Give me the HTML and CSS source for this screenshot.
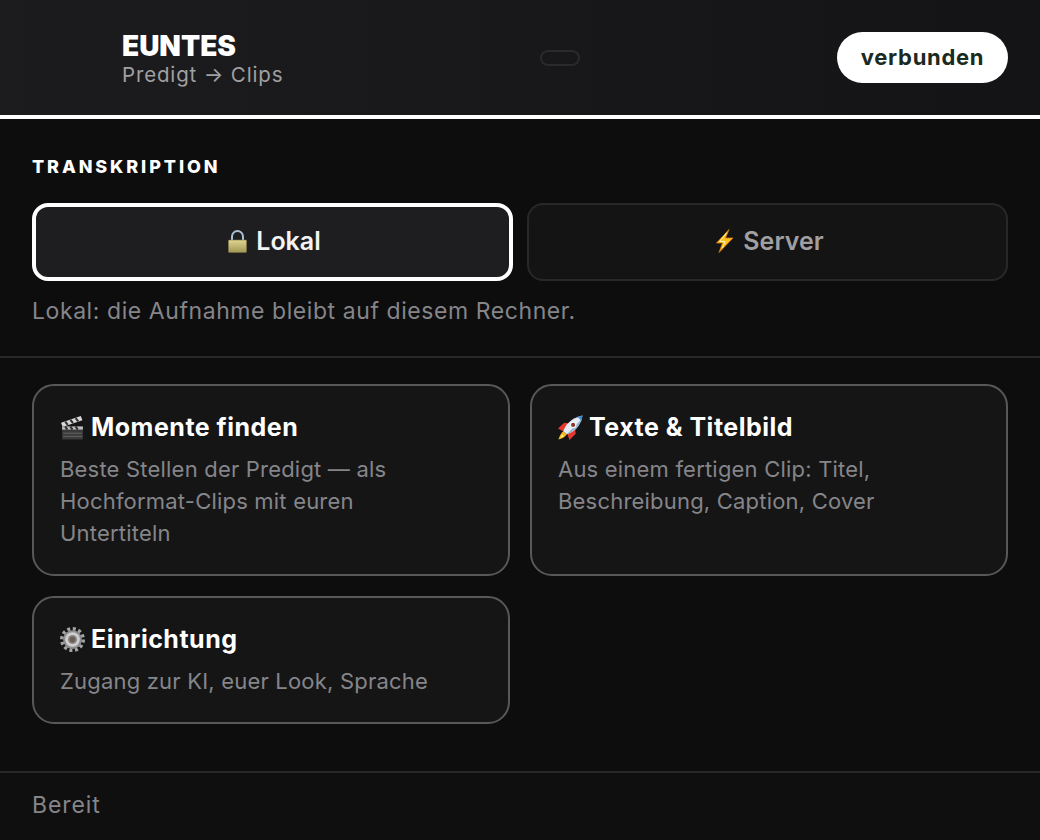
FILE: index.html
```html
<!DOCTYPE html>
<html lang="de">
<head>
<meta charset="utf-8">
<title>EUNTES</title>
<link rel="stylesheet" href="styles.css">
</head>
<body>
<div class="app">
  <header class="header">
    <div class="brand">
      <div class="brand-name">EUNTES</div>
      <div class="brand-sub">Predigt → Clips</div>
    </div>
    <div class="empty-pill"></div>
    <div class="status">verbunden</div>
  </header>

  <section class="transcription">
    <h2 class="label">TRANSKRIPTION</h2>
    <div class="modes">
      <button class="mode active">
        <svg class="emoji" viewBox="0 0 19 24"><defs><linearGradient id="lk" x1="0" y1="0" x2="0" y2="1"><stop offset="0" stop-color="#dfd690"/><stop offset="1" stop-color="#a39655"/></linearGradient></defs><path d="M4 12V7.500a5.500 5.500 0 0 1 11 0V12" fill="none" stroke="#a9bfd6" stroke-width="2"/><rect x=".4" y="11" width="18.200" height="12.500" rx="1" fill="url(#lk)" stroke="#7a7042" stroke-width=".6"/></svg>
        <span>Lokal</span>
      </button>
      <button class="mode">
        <svg class="emoji" viewBox="0 0 19 24"><path d="M14 .5 1.500 14h6L4 23.500 18 9h-7.500z" fill="#fcc21b" stroke="#d9780f" stroke-width=".8"/><path d="M12 3.500 4.500 12.500h5.500L7.500 19" fill="none" stroke="#fff3b0" stroke-width="1"/></svg>
        <span>Server</span>
      </button>
    </div>
    <p class="note">Lokal: die Aufnahme bleibt auf diesem Rechner.</p>
  </section>

  <main class="cards">
    <div class="card">
      <h3 class="card-title">
        <svg class="emoji" viewBox="0 0 24 24"><path d="M1 7.500 20 1l1.500 4L2.500 11.500z" fill="#d8d8d8"/><path d="m5 6.300 2.500 3.200M10 4.600l2.500 3.200M15 3l2.500 3.200" stroke="#333" stroke-width="2"/><rect x="2" y="11" width="20" height="12.500" fill="#3a3a3a"/><rect x="2" y="11" width="20" height="3" fill="#bdbdbd"/><path d="m5 11 2 3M10 11l2 3M15 11l2 3" stroke="#333" stroke-width="2"/><path d="M3 17.500h18M3 20.500h18" stroke="#6f6f6f" stroke-width=".8"/></svg>
        <span>Momente finden</span>
      </h3>
      <p class="card-text">Beste Stellen der Predigt — als Hochformat-Clips mit euren Untertiteln</p>
    </div>
    <div class="card">
      <h3 class="card-title">
        <svg class="emoji" viewBox="0 0 24 24"><path d="M0 13 6 7.500l4 .5L5 15.500zM16.500 13.500l.5 4.500-6 6-2-5.500z" fill="#e5392f"/><path d="M5 15.500C3 17 1 21 .5 23.500c3-.5 6.500-2.500 8-5z" fill="#fbb726"/><path d="M3.500 19C3 21 2.500 21.500 2 22c2-.2 3-1 4-2z" fill="#fdeb9a"/><path d="M5 15.500C7 10 12 3 23.500.5 21.500 11.500 15 16.500 8.500 18.500z" fill="#e3ecf4"/><path d="M8.500 18.500 22.500 4c-1.500 6-6.500 11.500-14 14.500z" fill="#8fb3cf"/><path d="M18 2c2 .7 3.500 2.200 4.500 4.500l1-6z" fill="#3d8ed8"/><circle cx="14.500" cy="9.500" r="2.600" fill="#8c3a30" stroke="#f2f6f9" stroke-width="1.200"/></svg>
        <span>Texte &amp; Titelbild</span>
      </h3>
      <p class="card-text">Aus einem fertigen Clip: Titel, Beschreibung, Caption, Cover</p>
    </div>
    <div class="card">
      <h3 class="card-title">
        <svg class="emoji" viewBox="0 0 24 24"><circle cx="12" cy="12" r="10.300" fill="none" stroke="#a3a3a3" stroke-width="3.400" stroke-dasharray="2.900 2.490"/><circle cx="12" cy="12" r="9" fill="#8e8e8e"/><circle cx="12" cy="12" r="7" fill="#cfcfcf"/><circle cx="12" cy="12" r="4.400" fill="#8a8a8a"/><circle cx="12" cy="12" r="2.800" fill="#6b5f52"/></svg>
        <span>Einrichtung</span>
      </h3>
      <p class="card-text">Zugang zur KI, euer Look, Sprache</p>
    </div>
  </main>

  <footer class="footer">Bereit</footer>
</div>
</body>
</html>
```

FILE: styles.css
```css
* { box-sizing: border-box; }
html, body { margin: 0; height: 100%; }
body {
  background: #0d0d0e;
  color: #fff;
  font-family: "Inter", "Open Sans", "Liberation Sans", sans-serif;
}
.app { height: 840px; display: flex; flex-direction: column; overflow: hidden; }

.header {
  height: 119px;
  flex: none;
  display: flex;
  align-items: center;
  justify-content: space-between;
  padding: 0 32px 0 122px;
  background: linear-gradient(90deg, #1c1c1e, #141416);
  border-bottom: 4px solid #fff;
}
.brand { padding-top: 2px; }
.brand-name { font-size: 28px; font-weight: 900; line-height: 31px; }
.brand-sub { font-size: 20.500px; line-height: 25px; color: #a0a0a3; letter-spacing: .85px; }
.empty-pill {
  width: 40px; height: 16px;
  border: 2px solid #2a2a2d;
  border-radius: 8px;
}
.status {
  width: 171px; height: 51px;
  padding-bottom: 2px;
  background: #fff;
  color: #1a2a22;
  border-radius: 26px;
  display: flex; align-items: center; justify-content: center;
  font-size: 22px; font-weight: 700; letter-spacing: .7px;
}

.transcription { padding: 36px 32px 30px; border-bottom: 2px solid #28282a; }
.label { margin: 0 0 24px; font-size: 18px; line-height: 24px; font-weight: 800; letter-spacing: 2.900px; }
.modes { display: grid; grid-template-columns: 481px 481px; gap: 14px; }
.mode {
  height: 78px;
  background: #141415;
  border: 2px solid #28282a;
  border-radius: 16px;
  color: #a0a0a3;
  font: 600 25px "Inter", sans-serif;
  display: flex; align-items: center; justify-content: center; gap: 9px;
  padding: 0 0 3px 4px;
}
.mode.active { background: #1e1e21; border: 4px solid #fff; color: #f4f4f5; }
.mode .emoji { width: 19px; height: 24px; }
.note { margin: 15px 0 0; font-size: 23px; line-height: 30px; color: #85858a; letter-spacing: .57px; }

.cards {
  flex: 1;
  display: grid;
  grid-template-columns: 478px 478px;
  grid-template-rows: 192px 128px;
  gap: 20px;
  padding: 26px 32px 0;
  align-content: start;
}
.card {
  background: #151516;
  border: 2px solid #58585a;
  border-radius: 22px;
  padding: 25px 26px 0;
}
.card-title {
  margin: 0 0 10px;
  display: flex; align-items: center; gap: 6px;
  font-size: 25px; line-height: 32px; font-weight: 700; color: #fff; letter-spacing: .5px;
}
.card-title .emoji { width: 25px; height: 25px; flex: none; }
.card-text { margin: 0; max-width: 400px; font-size: 22px; line-height: 32px; color: #85858a; letter-spacing: .2px; }

.footer {
  height: 69px;
  flex: none;
  padding: 0 32px 3px;
  display: flex; align-items: center;
  background: #0f0f10;
  border-top: 2px solid #28282a;
  font-size: 23px;
  letter-spacing: .9px;
  color: #85858a;
}
```
